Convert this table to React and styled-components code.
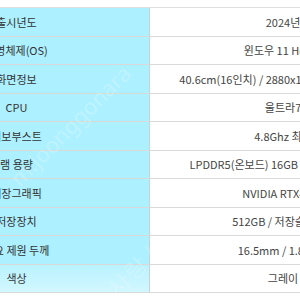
import React from "react";
import styled, { createGlobalStyle } from "styled-components";

const GlobalStyle = createGlobalStyle`
  html, body {
    margin: 0;
    padding: 0;
    background: #ffffff;
  }
  * {
    box-sizing: border-box;
  }
`;

const Page = styled.div`
  position: relative;
  width: 300px;
  height: 300px;
  padding-top: 7px;
  overflow: hidden;
  background: #ffffff;
  font-family: "Noto Sans CJK KR", "Noto Sans", sans-serif;
  font-size: 11px;
`;

const Table = styled.div`
  width: 532px;
  margin-left: -116px;
  border-top: 1px solid #dedede;
`;

const Row = styled.div`
  display: grid;
  grid-template-columns: 266px 266px;
  height: 28.53px;
  border-bottom: 1px solid #d9d9d9;
`;

const Label = styled.div`
  display: flex;
  align-items: center;
  justify-content: center;
  background: ${({ $last }) =>
    $last ? "linear-gradient(180deg, #b9f2ff 0%, #d2f7ff 100%)" : "#adf0ff"};
  border-right: 1px solid #cfcfcf;
  color: #333333;
  white-space: nowrap;
`;

const Value = styled.div`
  display: flex;
  align-items: center;
  justify-content: center;
  color: #444444;
  white-space: nowrap;
`;

const Watermark = styled.div`
  position: absolute;
  left: ${({ $x }) => $x}px;
  top: ${({ $y }) => $y}px;
  transform: rotate(-45deg);
  font-family: "Noto Sans", sans-serif;
  font-size: ${({ $size }) => $size}px;
  color: rgba(255, 255, 255, 0.22);
  white-space: nowrap;
  pointer-events: none;
`;

const specs = [
  { label: "출시년도", value: "2024년" },
  { label: "운영체제(OS)", value: "윈도우 11 Home" },
  { label: "화면정보", value: "40.6cm(16인치) / 2880x1800 / 120Hz / IPS" },
  { label: "CPU", value: "울트라7" },
  { label: "터보부스트", value: "4.8Ghz 최대" },
  { label: "램 용량", value: "LPDDR5(온보드) 16GB / 7467MHz 듀얼" },
  { label: "내장그래픽", value: "NVIDIA RTX4050" },
  { label: "저장장치", value: "512GB / 저장슬롯 2개" },
  { label: "주요 제원 두께", value: "16.5mm / 1.865kg" },
  { label: "색상", value: "그레이" },
];

function App() {
  return (
    <>
      <GlobalStyle />
      <Page>
        <Table>
          {specs.map((item, index) => (
            <Row key={item.label}>
              <Label $last={index === specs.length - 1}>{item.label}</Label>
              <Value>{item.value}</Value>
            </Row>
          ))}
        </Table>
        <Watermark $x={-10} $y={110} $size={22}>
          m.joonggonara
        </Watermark>
        <Watermark $x={100} $y={250} $size={22}>
          사랑 사
        </Watermark>
      </Page>
    </>
  );
}

export default App;
